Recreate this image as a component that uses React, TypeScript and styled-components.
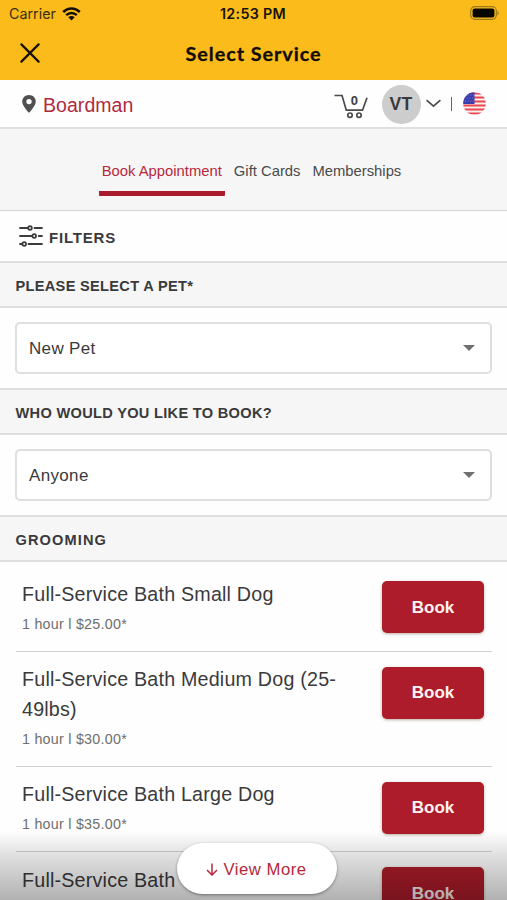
import React from "react";
import styled, { createGlobalStyle } from "styled-components";

const GlobalStyle = createGlobalStyle`
  *, *::before, *::after { box-sizing: border-box; }
  html, body { margin: 0; height: 900px; overflow: hidden; background: #fff; }
  body { font-family: "Liberation Sans", Arial, sans-serif; color: #3a3a3c; }
`;

const Screen = styled.div`
  position: relative;
  width: 507px;
  height: 900px;
  overflow: hidden;
  background: #fefefe;
`;

const TopArea = styled.header`
  height: 80px;
  background: #fbbc1b;
  color: #17120a;
`;

const StatusBar = styled.div`
  display: grid;
  grid-template-columns: 1fr auto 1fr;
  align-items: center;
  height: 27px;
  padding: 0 8px 0 9px;
  font: 400 14.3px/27px Inter, sans-serif;
`;

const Carrier = styled.div`
  display: flex;
  align-items: center;
  gap: 6px;
  color: #3a2d0c;
`;

const Clock = styled.div`
  margin-left: -2px;
  font-weight: 600;
  letter-spacing: 0.3px;
`;

const Battery = styled.svg`
  justify-self: end;
  margin-top: -1px;
`;

const NavBar = styled.div`
  display: grid;
  grid-template-columns: 60px 1fr 60px;
  align-items: center;
  height: 52px;
`;

const CloseButton = styled.button`
  display: flex;
  padding: 0 0 0 20px;
  border: 0;
  background: none;
`;

const Title = styled.h1`
  margin: 0;
  text-align: center;
  font: 700 19.8px/26px Lato, sans-serif;
  letter-spacing: 0.95px;
  -webkit-text-stroke: 0.3px #120d03;
  color: #120d03;
`;

const LocationBar = styled.div`
  display: flex;
  align-items: center;
  height: 49px;
  padding: 0 21px 0 22px;
  border-bottom: 2px solid #e0e0e0;
`;

const LocationName = styled.span`
  flex: 1;
  margin: 3px 0 0 7px;
  font-size: 19.5px;
  letter-spacing: 0.05px;
  color: #b02a40;
`;

const Avatar = styled.div`
  display: flex;
  align-items: center;
  justify-content: center;
  width: 39px;
  height: 39px;
  margin: 1px 5px 0 14px;
  border-radius: 50%;
  background: #cdcdcd;
  font-size: 17.5px;
  font-weight: 700;
  letter-spacing: 0.3px;
`;

const Divider = styled.span`
  width: 1.5px;
  height: 14px;
  margin: 0 11px 0 10px;
  background: #666;
`;

const Tabs = styled.nav`
  display: flex;
  justify-content: center;
  height: 82px;
  padding: 28px 4px 0 0;
  background: #f6f6f6;
  border-bottom: 1px solid #d4d4d4;
`;

const Tab = styled.a<{ $active?: boolean }>`
  height: 39px;
  padding: 0 3px;
  margin: 0 3px;
  border-bottom: 5px solid ${(p) => (p.$active ? "#aa1c2d" : "transparent")};
  border-radius: 1px;
  font-size: 14.8px;
  line-height: 28px;
  color: ${(p) => (p.$active ? "#b8283c" : "#4a4a4a")};
`;

const Filters = styled.div`
  display: flex;
  align-items: center;
  height: 50px;
  padding: 3px 0 0 19px;
  gap: 6px;
  font-size: 15px;
  font-weight: 700;
  letter-spacing: 0.8px;
  line-height: 20px;
`;

const SectionHeader = styled.h2<{ $spacing: number }>`
  height: 47px;
  margin: 0;
  padding-left: 15.5px;
  border-top: 2px solid #dfdfdf;
  border-bottom: 2px solid #dfdfdf;
  background: #f6f6f6;
  font-size: 14.6px;
  font-weight: 700;
  line-height: 47px;
  letter-spacing: ${(p) => p.$spacing}px;
`;

const SelectArea = styled.div`
  height: 80px;
  padding: 14px 15px 0;
`;

const SelectBox = styled.div`
  display: flex;
  align-items: center;
  justify-content: space-between;
  height: 52px;
  padding: 1px 15px 0 12px;
  border: 2px solid #dfdfdf;
  border-radius: 5px;
  background: #fff;
  font-size: 17px;
  line-height: 21px;
  letter-spacing: 0.34px;
`;

const ServiceList = styled.ul`
  margin: 0;
  padding: 4px 15px 0 16px;
  list-style: none;
`;

const ServiceRow = styled.li<{ $height: number }>`
  display: flex;
  justify-content: space-between;
  height: ${(p) => p.$height}px;
  padding: 13.5px 8px 0 6px;
  border-bottom: 1.5px solid #d2d2d2;
`;

const ServiceInfo = styled.div`
  width: 330px;
`;

const ServiceName = styled.div`
  font-size: 19.7px;
  line-height: 29.5px;
  letter-spacing: 0.2px;
`;

const ServiceMeta = styled.div`
  margin-top: 3.5px;
  font-size: 14.3px;
  line-height: 22px;
  letter-spacing: 0.25px;
  color: #6e6e6e;
`;

const BookButton = styled.button`
  width: 102px;
  height: 52px;
  margin-top: 1.5px;
  padding: 0;
  flex: none;
  border: 0;
  border-radius: 5px;
  background: #ad1c2a;
  box-shadow: 0 1px 3px rgba(90, 60, 30, 0.4);
  color: #fff4f4;
  font: 700 17px/51px "Liberation Sans", Arial, sans-serif;
  letter-spacing: 0.05px;
`;

const BottomFade = styled.div`
  position: absolute;
  inset: auto 0 0 0;
  height: 69px;
  display: flex;
  justify-content: center;
  padding: 12px 0 0 6px;
  background: linear-gradient(rgba(0, 0, 0, 0), rgba(0, 0, 0, 0.12) 36%, rgba(0, 0, 0, 0.3));
`;

const ViewMore = styled.button`
  display: flex;
  align-items: center;
  justify-content: center;
  gap: 5px;
  width: 160px;
  height: 51px;
  padding: 2px 0 0;
  border: 0;
  border-radius: 26px;
  background: #fff;
  box-shadow: 0 1px 3px rgba(0, 0, 0, 0.4);
  color: #b5283a;
  font: 400 16.7px/24px "Liberation Sans", Arial, sans-serif;
  letter-spacing: 0.5px;
`;

const WifiIcon = () => (
  <svg width="19" height="14" viewBox="0 0 19 14" fill="none" stroke="#15110a">
    <path d="M1.2 5C5.9.3 13.1.3 17.8 5" strokeWidth="2.5" />
    <path d="M4.2 8.2c3-3 7.600-3 10.600 0" strokeWidth="2.400" />
    <path d="M9.500 13.600 6.300 10.300c1.900-1.600 4.500-1.600 6.400 0Z" fill="#15110a" stroke="none" />
  </svg>
);

const BatteryIcon = () => (
  <Battery width="29" height="14" viewBox="0 0 29 14">
    <rect x=".7" y=".7" width="25.600" height="12.600" rx="4" fill="none" stroke="#9b7919" strokeWidth="1.200" />
    <rect x="2.600" y="2.600" width="21.800" height="8.800" rx="2" fill="#080600" />
    <path d="M27.500 4.700c1.500.7 1.500 3.900 0 4.600Z" fill="#8a6b16" />
  </Battery>
);

const CloseIcon = () => (
  <svg width="20" height="20" viewBox="0 0 20 20" stroke="#191204" strokeWidth="2.200" strokeLinecap="round">
    <path d="m1.400 1.400 17.200 17.200M18.600 1.400 1.400 18.600" />
  </svg>
);

const PinIcon = () => (
  <svg width="14" height="18" viewBox="0 0 14 18">
    <path
      fill="#505050"
      fillRule="evenodd"
      d="M7 0C3 0 .2 2.900.2 6.600.2 11 7 18 7 18s6.800-7 6.800-11.400C13.800 2.900 11 0 7 0Zm0 3.900a2.700 2.700 0 1 1 0 5.400 2.700 2.700 0 0 1 0-5.400Z"
    />
  </svg>
);

const CartSvg = styled.svg`
  margin-top: 5px;
`;

const CartIcon = () => (
  <CartSvg width="34" height="25" viewBox="0 0 34 25" fill="none" stroke="#4a4a4c" strokeWidth="1.700">
    <path d="M.5 1.500H8l4.300 14.700h16.200L33 3.700" />
    <circle cx="16" cy="21.200" r="2.200" />
    <circle cx="25" cy="21.200" r="2.200" />
    <text x="20.300" y="11.200" textAnchor="middle" fill="#3d3d3f" stroke="none" fontFamily="Liberation Sans" fontSize="13" fontWeight="700">0</text>
  </CartSvg>
);

const ChevronIcon = () => (
  <svg width="15" height="9" viewBox="0 0 15 9" fill="none" stroke="#4c4c4c" strokeWidth="1.700">
    <path d="m.6 1.200 6.900 6 6.900-6" />
  </svg>
);

const FlagIcon = () => (
  <svg width="23" height="23" viewBox="0 0 23 23">
    <defs>
      <clipPath id="flag-round"><circle cx="11.500" cy="11.500" r="11.300" /></clipPath>
    </defs>
    <g clipPath="url(#flag-round)">
      <rect width="23" height="23" fill="#fbeeee" />
      <path d="M0 1.500h23M0 5.500h23M0 9.500h23M0 13.500h23M0 17.500h23M0 21.500h23" stroke="#e8484f" strokeWidth="1.900" />
      <rect width="11.500" height="12" fill="#3a3cae" />
      <path d="M2 3h9M1 6h10M2 9h9" stroke="#8f90d6" strokeWidth=".9" strokeDasharray="1 1.700" />
    </g>
  </svg>
);

const FilterSvg = styled.svg`
  margin-top: -3px;
`;

const FiltersIcon = () => (
  <FilterSvg width="24" height="22" viewBox="0 0 24 22" fill="none" stroke="#3c3c3e" strokeWidth="1.800" strokeLinecap="round">
    <path d="M1 3h7.500M15.500 3H23M1 11h11.500M19.700 11H23M1 19h1.500M9.500 19H23" />
    <circle cx="11" cy="3" r="1.800" />
    <circle cx="15.200" cy="11" r="1.800" />
    <circle cx="5.200" cy="19" r="1.800" />
  </FilterSvg>
);

const CaretIcon = () => (
  <svg width="12" height="8" viewBox="0 0 12 8"><path d="M0 0h12L6 6Z" fill="#707070" /></svg>
);

const ArrowDownIcon = () => (
  <svg width="12" height="13" viewBox="0 0 12 13" fill="none" stroke="#b5283a" strokeWidth="1.500">
    <path d="M6 .5v11.300M1 7l5 5 5-5" />
  </svg>
);

const services = [
  { name: "Full-Service Bath Small Dog", meta: "1 hour l $25.00*", height: 85.5 },
  { name: "Full-Service Bath Medium Dog (25-49lbs)", meta: "1 hour l $30.00*", height: 115 },
  { name: "Full-Service Bath Large Dog", meta: "1 hour l $35.00*", height: 85.5 },
  { name: "Full-Service Bath", meta: "", height: 85.5 },
];

export default function App() {
  return (
    <>
      <GlobalStyle />
      <Screen>
        <TopArea>
          <StatusBar>
            <Carrier>Carrier <WifiIcon /></Carrier>
            <Clock>12:53 PM</Clock>
            <BatteryIcon />
          </StatusBar>
          <NavBar>
            <CloseButton aria-label="Close"><CloseIcon /></CloseButton>
            <Title>Select Service</Title>
          </NavBar>
        </TopArea>
        <LocationBar>
          <PinIcon />
          <LocationName>Boardman</LocationName>
          <CartIcon />
          <Avatar>VT</Avatar>
          <ChevronIcon />
          <Divider />
          <FlagIcon />
        </LocationBar>
        <Tabs>
          <Tab $active>Book Appointment</Tab>
          <Tab>Gift Cards</Tab>
          <Tab>Memberships</Tab>
        </Tabs>
        <Filters><FiltersIcon />FILTERS</Filters>
        <SectionHeader $spacing={0.3}>PLEASE SELECT A PET*</SectionHeader>
        <SelectArea>
          <SelectBox>New Pet<CaretIcon /></SelectBox>
        </SelectArea>
        <SectionHeader $spacing={0.3}>WHO WOULD YOU LIKE TO BOOK?</SectionHeader>
        <SelectArea>
          <SelectBox>Anyone<CaretIcon /></SelectBox>
        </SelectArea>
        <SectionHeader $spacing={1.1}>GROOMING</SectionHeader>
        <ServiceList>
          {services.map((s) => (
            <ServiceRow key={s.name} $height={s.height}>
              <ServiceInfo>
                <ServiceName>{s.name}</ServiceName>
                <ServiceMeta>{s.meta}</ServiceMeta>
              </ServiceInfo>
              <BookButton>Book</BookButton>
            </ServiceRow>
          ))}
        </ServiceList>
        <BottomFade>
          <ViewMore><ArrowDownIcon />View More</ViewMore>
        </BottomFade>
      </Screen>
    </>
  );
}
